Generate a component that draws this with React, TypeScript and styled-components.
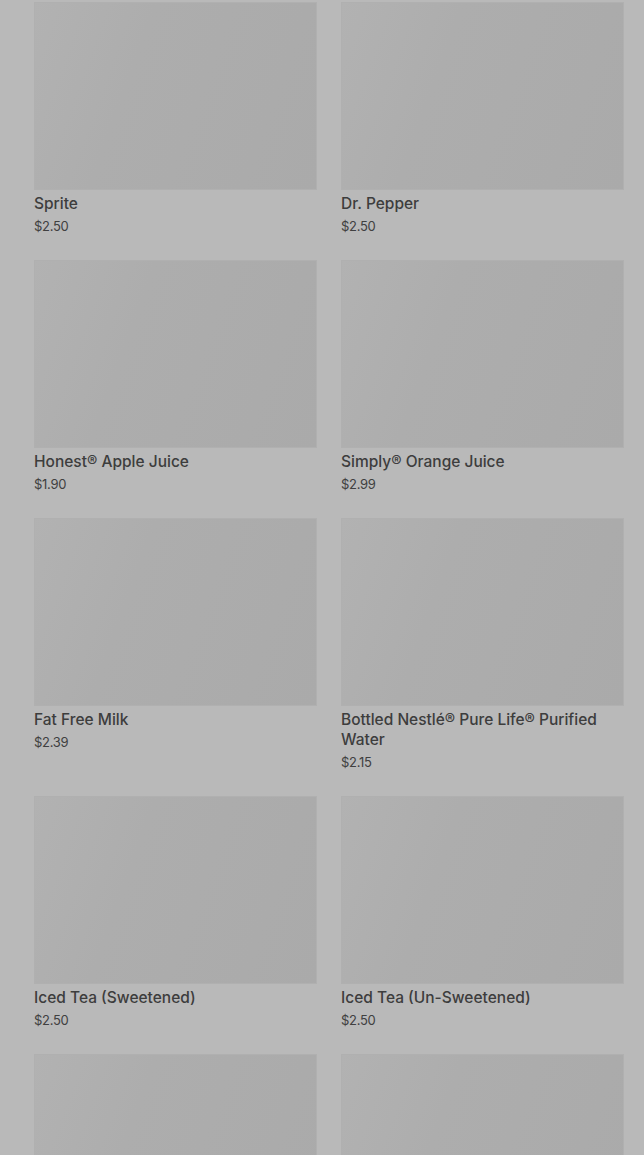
import React from 'react';
import styled, { createGlobalStyle } from 'styled-components';

const GlobalStyle = createGlobalStyle`
  html, body {
    margin: 0;
    padding: 0;
    background-color: #b9b9b9;
  }
  body {
    font-family: Inter, Roboto, "Liberation Sans", sans-serif;
    height: 1155px;
    overflow: hidden;
  }
`;

const Page = styled.div`
  background-color: #b9b9b9;
  padding: 2px 20px 0 34px;
  height: 1153px;
  overflow: hidden;
`;

const Grid = styled.div`
  display: grid;
  grid-template-columns: 283px 283px;
  column-gap: 24px;
  row-gap: 24px;
`;

const Item = styled.div`
  display: flex;
  flex-direction: column;
`;

const Photo = styled.div`
  height: 188px;
  background: linear-gradient(110deg, #b2b2b2 0%, #adadad 35%, #aaaaaa 100%);
  box-shadow: inset 0 0 0 1px #b0b0b0;
`;

const Name = styled.div`
  margin-top: 4px;
  font-size: 15.5px;
  line-height: 20px;
  font-weight: 500;
  color: #3d3d3d;
`;

const Price = styled.div`
  margin-top: 2px;
  font-size: 13px;
  line-height: 20px;
  color: #404040;
  letter-spacing: -0.3px;
`;

type Drink = { name?: string; price?: string };

const drinks: Drink[] = [
  { name: 'Sprite', price: '$2.50' },
  { name: 'Dr. Pepper', price: '$2.50' },
  { name: 'Honest® Apple Juice', price: '$1.90' },
  { name: 'Simply® Orange Juice', price: '$2.99' },
  { name: 'Fat Free Milk', price: '$2.39' },
  { name: 'Bottled Nestlé® Pure Life® Purified Water', price: '$2.15' },
  { name: 'Iced Tea (Sweetened)', price: '$2.50' },
  { name: 'Iced Tea (Un-Sweetened)', price: '$2.50' },
  {},
  {},
];

const App: React.FC = () => {
  return (
    <>
      <GlobalStyle />
      <Page>
        <Grid>
          {drinks.map((d, i) => (
            <Item key={i}>
              <Photo />
              {d.name && <Name>{d.name}</Name>}
              {d.price && <Price>{d.price}</Price>}
            </Item>
          ))}
        </Grid>
      </Page>
    </>
  );
};

export default App;
